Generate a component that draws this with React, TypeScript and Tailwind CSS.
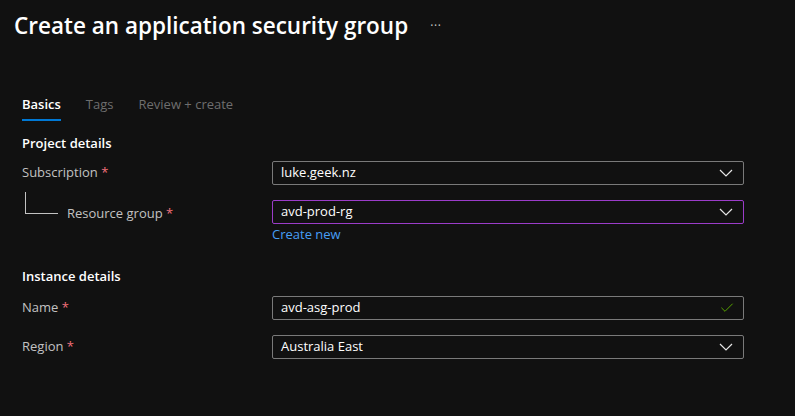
import { Check } from 'lucide-react'

const font = { fontFamily: '"Open Sans", "Noto Sans", sans-serif' }

function Label({ text }: { text: string }) {
  return (
    <span className="text-[13px] text-[#c2c2c2]">
      {text} <span className="text-[#f1707b]">*</span>
    </span>
  )
}

function Chevron() {
  return (
    <svg width="14" height="8" viewBox="0 0 14 8" fill="none" className="mr-[2px]">
      <polyline points="1,1 7,7 13,1" stroke="#e6e6e6" strokeWidth="1.2" />
    </svg>
  )
}

function Field({ value, border = 'border-[#7a7a7a]', icon = 'chevron' }: { value: string; border?: string; icon?: 'chevron' | 'check' }) {
  return (
    <div className={`flex h-6 w-[472px] items-center justify-between rounded-[2px] border bg-[#111111] pl-2 pr-2 ${border}`}>
      <span className="text-[13px] text-white">{value}</span>
      {icon === 'chevron' ? <Chevron /> : <Check className="h-4 w-4 text-[#57a300]" strokeWidth={1.5} />}
    </div>
  )
}

export default function App() {
  return (
    <div className="h-[416px] w-[795px] bg-[#111111] text-white" style={font}>
      <div className="flex items-center gap-[22px] pl-[14px] pt-[10px]">
        <h1 className="text-[22.5px] font-semibold leading-8">Create an application security group</h1>
        <span className="text-[12px] tracking-wider text-[#c8c8c8]">···</span>
      </div>

      <div className="mt-[52px] flex gap-[25px] pl-[22px] text-[13px]">
        <div className="flex flex-col">
          <span className="font-semibold leading-5">Basics</span>
          <span className="mt-[5px] h-[2px] w-full bg-[#0078d4]" />
        </div>
        <span className="leading-5 text-[#6e6e6e]">Tags</span>
        <span className="leading-5 text-[#6e6e6e]">Review + create</span>
      </div>

      <div className="pl-[22px] pr-[51px]">
        <h2 className="mt-[12px] text-[13px] font-semibold leading-5">Project details</h2>

        <div className="mt-[8px] flex items-center justify-between">
          <Label text="Subscription" />
          <Field value="luke.geek.nz" />
        </div>

        <div className="mt-[15px] flex items-start justify-between">
          <div className="flex items-end">
            <span className="-mt-[14px] ml-[3px] h-[22px] w-[33px] border-b border-l border-[#c2c2c2]" />
            <span className="ml-[9px] -mb-[10px]">
              <Label text="Resource group" />
            </span>
          </div>
          <div className="flex flex-col">
            <Field value="avd-prod-rg" border="border-[#9b3cc9]" />
            <span className="text-[13px] leading-5 text-[#479ef5]">Create new</span>
          </div>
        </div>

        <h2 className="mt-[22px] text-[13px] font-semibold leading-5">Instance details</h2>

        <div className="mt-[10px] flex items-center justify-between">
          <Label text="Name" />
          <Field value="avd-asg-prod" icon="check" />
        </div>

        <div className="mt-[15px] flex items-center justify-between">
          <Label text="Region" />
          <Field value="Australia East" />
        </div>
      </div>
    </div>
  )
}
